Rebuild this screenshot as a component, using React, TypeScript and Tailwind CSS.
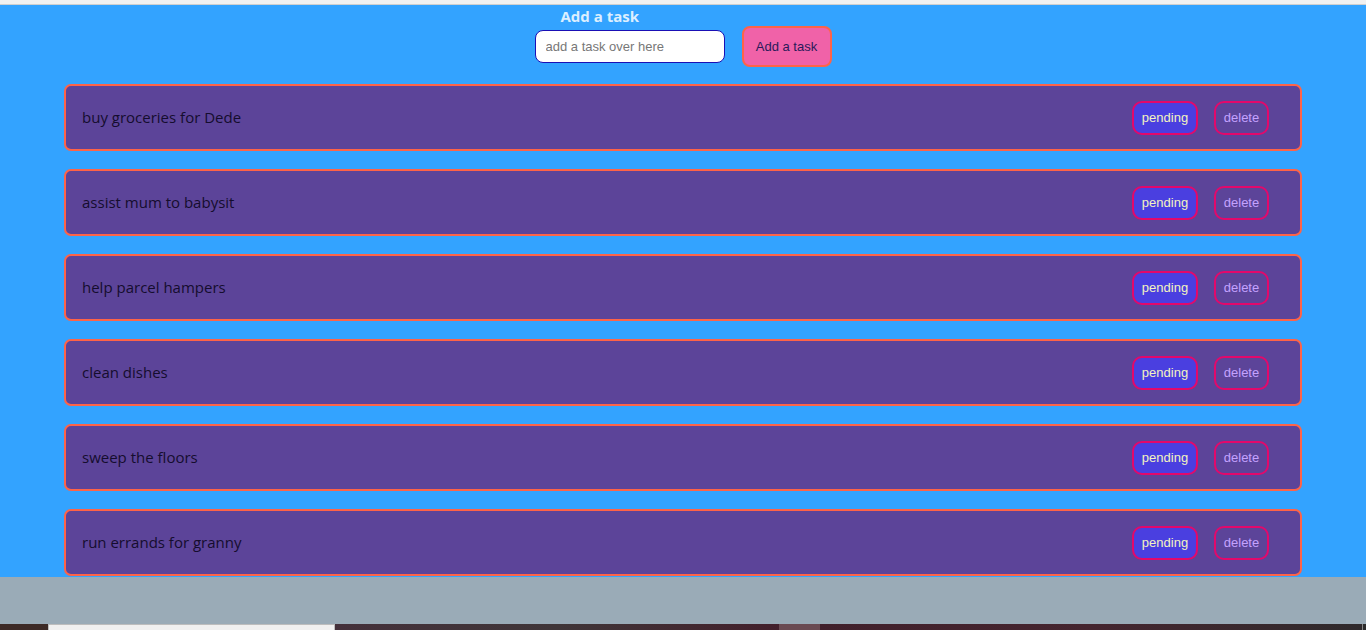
import React from "react";

const tasks = [
  "buy groceries for Dede",
  "assist mum to babysit",
  "help parcel hampers",
  "clean dishes",
  "sweep the floors",
  "run errands for granny",
];

export default function App() {
  return (
    <div className="w-[1366px] h-[630px] overflow-hidden bg-[#9aabb7] flex flex-col">
      <div className="h-[5px] shrink-0 bg-[#f1f1f1] border-b border-[#cfcfcf]" />
      <div className="h-[572px] shrink-0 bg-[#33a3ff] flex flex-col">
        <div className="flex justify-center">
          <div className="flex flex-col">
            <h1
              className="pl-[26px] text-[15px] font-bold leading-[22px] text-[#dcefff]"
              style={{ fontFamily: '"Open Sans", "Noto Sans", sans-serif' }}
            >
              Add a task
            </h1>
            <div className="flex items-center gap-[17px] mt-[-1px]">
              <input
                placeholder="add a task over here"
                className="w-[190px] h-[33px] rounded-[8px] border border-[#1a0fb5] bg-white px-[10px] text-[13px] text-[#333] placeholder:text-[#777] outline-none"
                style={{ fontFamily: '"Liberation Sans", Arial, sans-serif' }}
              />
              <button
                className="w-[90px] h-[41px] rounded-[8px] border-2 border-[#ff6347] bg-[#f062a8] text-[13px] text-[#2a1a5a]"
                style={{ fontFamily: '"Liberation Sans", Arial, sans-serif' }}
              >
                Add a task
              </button>
            </div>
          </div>
        </div>
        <div className="flex flex-col gap-[18px] w-[1238px] ml-[64px] mt-[17px]">
          {tasks.map((t) => (
            <div
              key={t}
              className="h-[67px] rounded-[7px] border-2 border-[#ff6347] bg-[#5c4499] flex items-center pl-[16px] pr-[31px]"
            >
              <span
                className="flex-1 text-[15px] text-[#150d2e]"
                style={{ fontFamily: '"Open Sans", "Noto Sans", sans-serif' }}
              >
                {t}
              </span>
              <div
                className="flex items-center gap-[16px]"
                style={{ fontFamily: '"Liberation Sans", Arial, sans-serif' }}
              >
                <button className="w-[66px] h-[34px] rounded-[10px] border-2 border-[#e3086b] bg-[#4a3fe0] text-[13px] text-[#f3f3bf]">
                  pending
                </button>
                <button className="w-[55px] h-[34px] rounded-[10px] border-2 border-[#e3086b] bg-transparent text-[13px] text-[#c4a2ff]">
                  delete
                </button>
              </div>
            </div>
          ))}
        </div>
      </div>
      <div className="h-[47px] shrink-0 bg-[#9aabb7]" />
      <div className="h-[6px] shrink-0 flex">
        <div className="w-[48px] bg-[#3d2a26]" />
        <div className="w-[287px] bg-[#f0f0f0] border-l border-t border-r border-[#bdbdbd]" />
        <div className="w-[444px] bg-gradient-to-r from-[#44303a] via-[#3f3538] to-[#431f2b]" />
        <div className="w-[41px] bg-[#6a4a52]" />
        <div className="flex-1 bg-gradient-to-r from-[#41202b] via-[#45252f] to-[#2f2a2c]" />
        <div className="w-[4px] bg-[#2b2b2b] border-l border-[#888]" />
      </div>
    </div>
  );
}
